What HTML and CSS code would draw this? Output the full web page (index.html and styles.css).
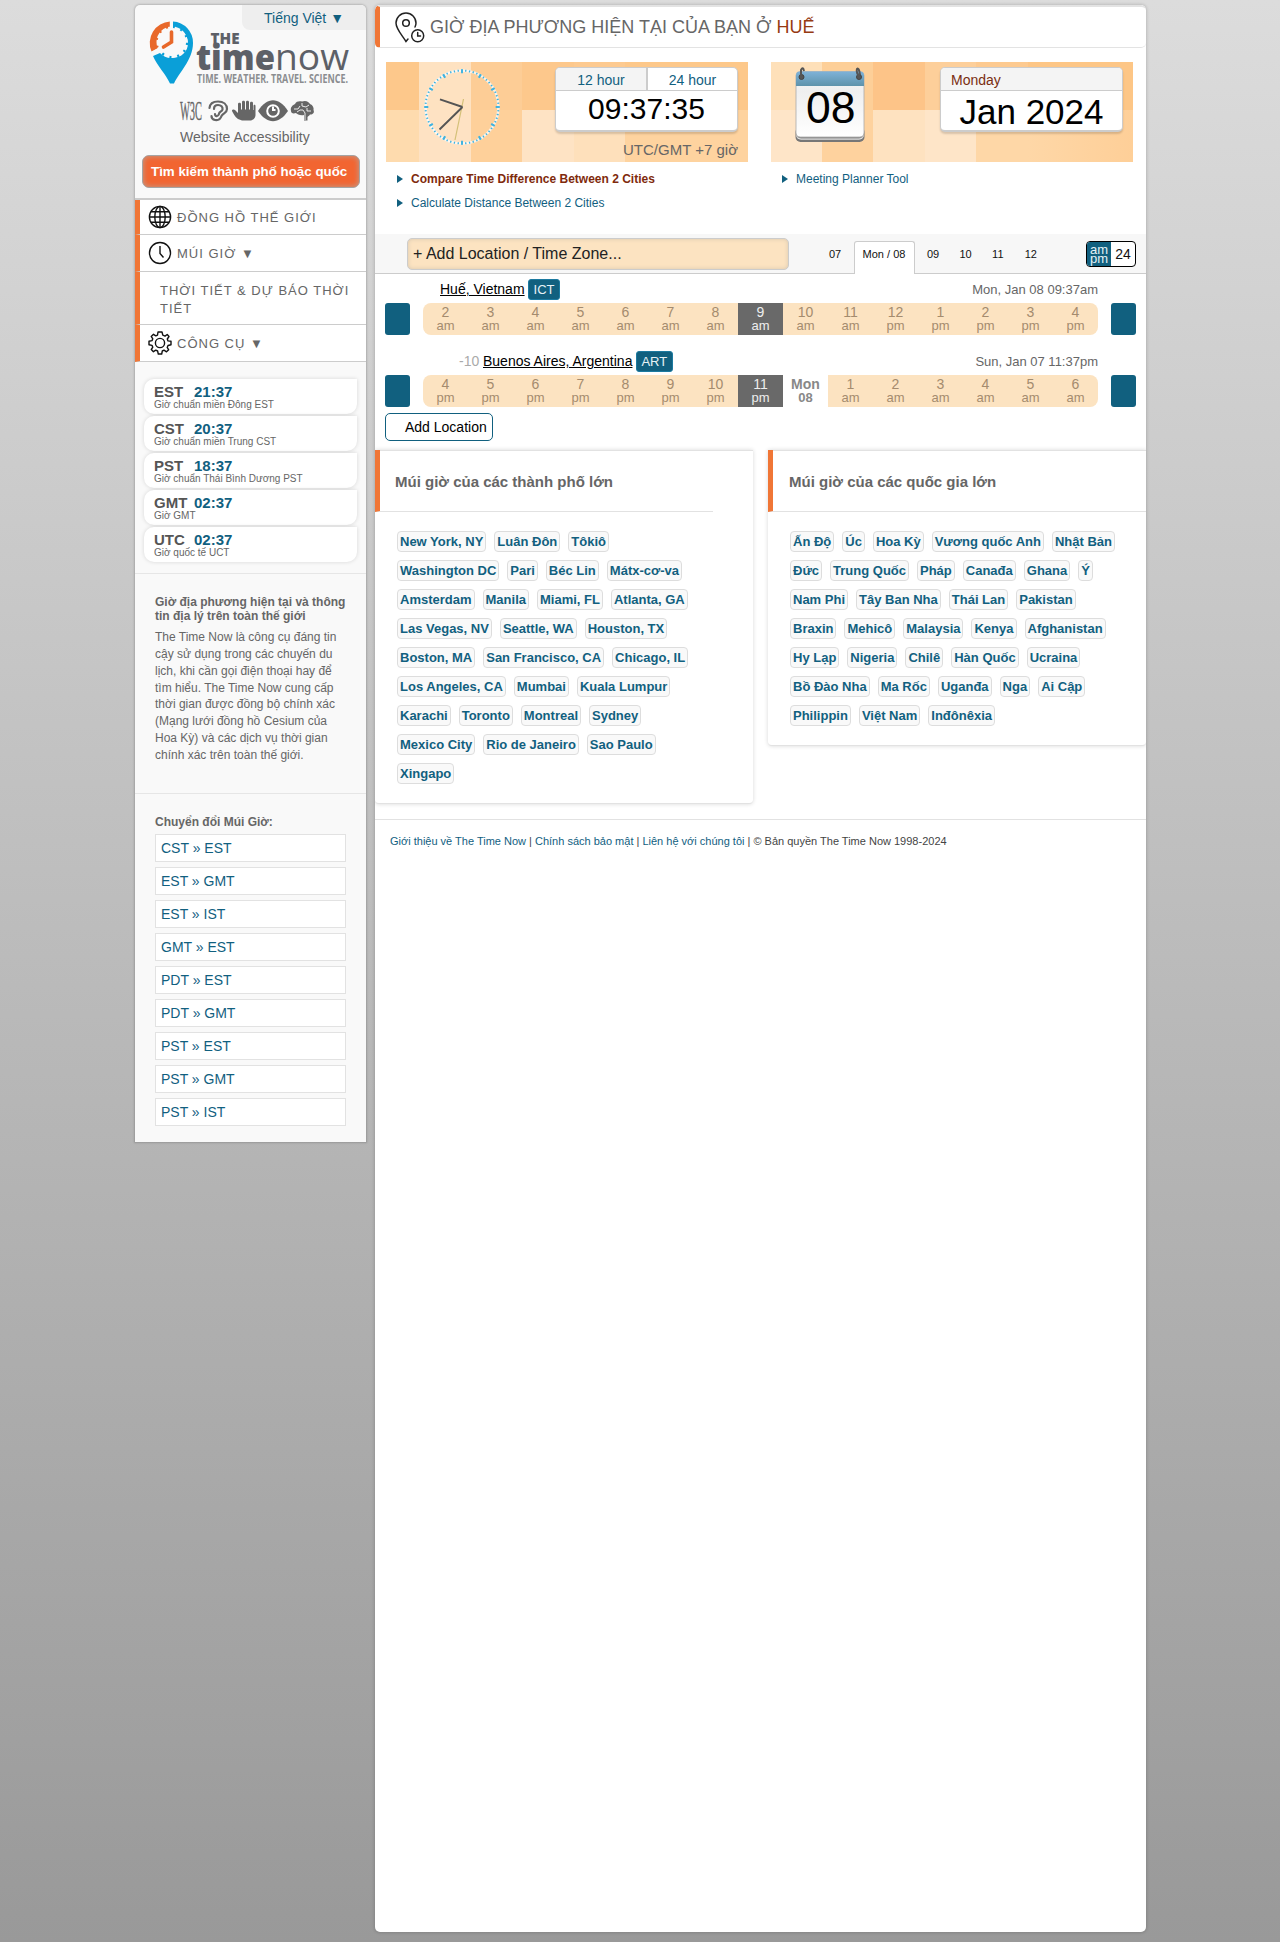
FILE: index.html
```html
<!DOCTYPE html>
<html lang="vi">
<head>
<meta charset="utf-8">
<title>The Time Now - Huế</title>
<link rel="stylesheet" href="styles.css">
</head>
<body>
<div class="page">
  <aside class="sidebar">
    <div class="lang">Tiếng Việt ▼</div>
    <svg class="logo" width="200" height="66" viewBox="0 0 200 66">
      <path d="M23 0.5V7A15 15 0 0 1 38 22A15 15 0 0 1 23 37A15 15 0 0 1 10 32L3 35C8 46 15 52 20 62.500H24C28 53 43 39 43 22A21 21 0 0 0 23 .5Z" fill="#0a9fd8"/>
      <path d="M20 .5A21.500 21.500 0 0 0 1.500 30.500L8 27A15 15 0 0 1 20 7Z" fill="#e8682a"/>
      <circle cx="22" cy="21" r="15.500" fill="#f9f9f9"/>
      <path d="M23 5.800A15.200 15.200 0 1 1 9.500 29.500" fill="none" stroke="#0a9fd8" stroke-width="2.500" stroke-dasharray="2 5.850"/>
      <path d="M7.500 26.500A15.200 15.200 0 0 1 20 5.800" fill="none" stroke="#e8682a" stroke-width="2.500" stroke-dasharray="2 5.850"/>
      <path d="M21.500 11V21L13.500 26" fill="none" stroke="#e8682a" stroke-width="3.600" stroke-linecap="round"/>
      <rect x="19.800" y="0" width="3" height="7" fill="#f9f9f9"/>
      <path d="M2 32L9 28" stroke="#f9f9f9" stroke-width="2.500"/>
      <text class="logo-the" x="60.500" y="23" textLength="29" lengthAdjust="spacingAndGlyphs">THE</text>
      <text class="logo-time" x="46" y="48.500" textLength="79" lengthAdjust="spacingAndGlyphs">time</text>
      <text class="logo-now" x="125" y="48.500" textLength="74" lengthAdjust="spacingAndGlyphs">now</text>
      <text class="logo-tag" x="47" y="61.500" textLength="151" lengthAdjust="spacingAndGlyphs">TIME. WEATHER. TRAVEL. SCIENCE.</text>
    </svg>
    <svg class="access" width="136" height="22" viewBox="0 0 136 22">
      <text class="w3c" x="0" y="19.500" textLength="22" lengthAdjust="spacingAndGlyphs">W3C</text>
      <g fill="none" stroke="#666" stroke-width="2.200" stroke-linecap="round">
        <path d="M29.500 8C30 3 34 1.500 38 1.500C43.500 1.500 47 4.500 47 9C47 13 43 13 41.500 16C40.500 19 38 20.500 35 20C32.500 19.500 31.500 18 31.500 16"/>
        <path d="M34 9C34 6 36 5 38 5C41 5 43 7 42.500 9.500C42 12 39 11 39 14C38 17 35 16.500 35 14"/>
      </g>
      <path d="M58 19C55 17 53 13 52 11C51.500 9.500 54 9 55 10L58 13L58 4C58 2.200 61 2.200 61 4V9.500H62V2C62 .3 65 .3 65 2V9.500H66V2C66 .3 69 .3 69 2V9.500H70V3C70 1.300 73 1.300 73 3V10H73.500V6C73.500 4.300 75.500 4.300 75.500 6V15C75.500 18 73 20.500 70 20.500H62Z" fill="#666"/>
      <path d="M78 11C87 -3.500 99 -3.500 108 11C99 24.500 87 24.500 78 11Z" fill="#666"/>
      <circle cx="93" cy="11" r="5.800" fill="none" stroke="#fff" stroke-width="2"/>
      <path d="M93 6.500V10H95.500" stroke="#fff" stroke-width="2" fill="none"/>
      <path d="M111 11C110 7 113 5 115 4C116 1 120 1 122 1.500C126 0 129 2 130 4C133 5 134 8 133.500 10C135 13 132 15 130 14.500C129 16 128 16 127.500 17V20.500H124V15C121 16 117 14.500 116 13C113 14 111 13 111 11Z" fill="#666"/>
      <path d="M114 9H118L120 6M117 12L120 10H123L125 13M122 3V6L126 7L129 5M127 8V11L131 11M125 13V20" fill="none" stroke="#f9f9f9" stroke-width=".9"/>
    </svg>
    <div class="access-label">Website Accessibility</div>
    <div class="find">Tìm kiếm thành phố hoặc quốc</div>
    <nav class="menu">
      <a class="item globe">
        <svg width="24" height="24" viewBox="0 0 24 24" fill="none" stroke="#111" stroke-width="1.400"><circle cx="12" cy="12" r="10.600"/><ellipse cx="12" cy="12" rx="5.200" ry="10.600"/><path d="M12 1.400V22.600M1.400 12H22.600M3 6.800H21M3 17.200H21"/></svg>
        <span>ĐỒNG HỒ THẾ GIỚI</span></a>
      <a class="item">
        <svg width="24" height="24" viewBox="0 0 24 24" fill="none" stroke="#111" stroke-width="1.400"><circle cx="12" cy="12" r="10.500"/><path d="M12 5V12.500L15.500 16.500"/></svg>
        <span>MÚI GIỜ ▼</span></a>
      <a class="item weather"><span>THỜI TIẾT &amp; DỰ BÁO THỜI TIẾT</span></a>
      <a class="item">
        <svg width="24" height="24" viewBox="0 0 24 24" fill="none" stroke="#111" stroke-width="1.400" stroke-linejoin="round"><circle cx="12" cy="12" r="4.600"/><path d="M10 1H14L14.800 4.200L17 5.100L19.200 3.500L21 5.500L19.300 8L20 9.900L23 10.300V13.700L20 14.500L19.200 16.400L20.700 18.800L18.500 20.800L16 19.200L14.300 20L13.700 23H10.300L9.600 20L7.800 19.200L5.400 20.700L3.300 18.500L4.800 16.200L4 14.400L1 13.700V10.300L4 9.600L4.800 7.800L3.200 5.400L5.500 3.300L7.800 4.800L9.500 4.100Z"/></svg>
        <span>CÔNG CỤ ▼</span></a>
    </nav>
    <div class="zones">
      <div class="zone"><b>EST</b><strong>21:37</strong><small>Giờ chuẩn miền Đông EST</small></div>
      <div class="zone"><b>CST</b><strong>20:37</strong><small>Giờ chuẩn miền Trung CST</small></div>
      <div class="zone"><b>PST</b><strong>18:37</strong><small>Giờ chuẩn Thái Bình Dương PST</small></div>
      <div class="zone"><b>GMT</b><strong>02:37</strong><small>Giờ GMT</small></div>
      <div class="zone"><b>UTC</b><strong>02:37</strong><small>Giờ quốc tế UCT</small></div>
    </div>
    <section class="about">
      <h4>Giờ địa phương hiện tại và thông tin địa lý trên toàn thế giới</h4>
      <p>The Time Now là công cụ đáng tin<br>cậy sử dụng trong các chuyến du<br>lịch, khi cần gọi điện thoại hay để<br>tìm hiểu. The Time Now cung cấp<br>thời gian được đồng bộ chính xác<br>(Mạng lưới đồng hồ Cesium của<br>Hoa Kỳ) và các dịch vụ thời gian<br>chính xác trên toàn thế giới.</p>
    </section>
    <section class="convert">
      <h4>Chuyển đổi Múi Giờ:</h4>
      <a>CST » EST</a><a>EST » GMT</a><a>EST » IST</a><a>GMT » EST</a><a>PDT » EST</a><a>PDT » GMT</a><a>PST » EST</a><a>PST » GMT</a><a>PST » IST</a>
    </section>
  </aside>

  <main class="main">
    <header class="head">
      <svg width="30" height="31" viewBox="0 0 30 31" fill="none" stroke="#222" stroke-width="1.500" stroke-linecap="round"><path d="M13 27L11 29.500C7 23 1 17 1 11A10 10 0 0 1 21 11C21 12.500 20.500 14 20 15"/><circle cx="11" cy="11" r="3.300"/><circle cx="22.700" cy="23.800" r="6"/><path d="M22.700 20.500V24H25.500"/></svg>
      <h1>GIỜ ĐỊA PHƯƠNG HIỆN TẠI CỦA BẠN Ở <em>HUẾ</em></h1>
    </header>
    <div class="banners">
      <div class="col">
        <div class="banner one">
          <svg class="clock" width="78" height="78" viewBox="0 0 78 78" fill="none">
            <circle cx="39" cy="39" r="36.500" stroke="#fff" stroke-width="2.500" stroke-opacity=".7"/>
            <circle cx="39" cy="39" r="36.500" stroke="#3fb3e0" stroke-width="2" pathLength="240" stroke-dasharray="1.400 2.600" stroke-dashoffset=".7"/>
            <circle cx="39" cy="39" r="35.700" stroke="#3fb3e0" stroke-width="4" pathLength="240" stroke-dasharray="2.200 17.800" stroke-dashoffset="1.100"/>
            <path d="M40.500 31L32 72" stroke="#d3c077" stroke-width="1.200"/>
            <path d="M39.500 39L17 31.300M39.500 39L16.500 61.500" stroke="#555" stroke-width="1.900"/>
          </svg>
          <div class="right">
            <div class="box"><div class="tabs"><span class="on">12 hour</span><span>24 hour</span></div><div class="time">09:37:35</div></div>
            <div class="utc">UTC/GMT +7 giờ</div>
          </div>
        </div>
        <a class="lnk hot">Compare Time Difference Between 2 Cities</a>
        <a class="lnk">Calculate Distance Between 2 Cities</a>
      </div>
      <div class="col">
        <div class="banner two">
          <div class="cal">
            <svg class="calpic" width="70" height="76" viewBox="0 0 70 76">
              <defs>
                <linearGradient id="blue" x1="0" y1="0" x2="0" y2="1"><stop offset="0" stop-color="#7fb2d8"/><stop offset="1" stop-color="#5e93ab"/></linearGradient>
                <linearGradient id="paper" x1="0" y1="0" x2="0" y2="1"><stop offset="0" stop-color="#fafafa"/><stop offset=".3" stop-color="#efefef"/><stop offset="1" stop-color="#fff"/></linearGradient>
              </defs>
              <rect x=".5" y="60" width="69" height="15" rx="5" fill="#777"/>
              <rect x="1" y="58" width="68" height="14.800" rx="5" fill="#ddd"/>
              <rect x="1" y="58" width="68" height="13.500" rx="5" fill="#888"/>
              <rect x="1" y="4.500" width="68" height="65.500" rx="4" fill="url(#paper)" stroke="#aaa" stroke-width=".8"/>
              <path d="M1 19V8.500A4 4 0 0 1 5 4.500H65A4 4 0 0 1 69 8.500V19Z" fill="url(#blue)"/>
              <g stroke="#444" fill="#555"><circle cx="6.500" cy="10" r="2.500"/><circle cx="64" cy="10" r="2.500"/></g>
              <path d="M6 9V3Q8 -1 9 4M64 9Q61 6 62 2Q64 0 65 8" fill="none" stroke="#555" stroke-width="2"/>
            </svg>
            <span class="day">08</span>
          </div>
          <div class="right"><div class="box"><div class="weekday">Monday</div><div class="month">Jan 2024</div></div></div>
        </div>
        <a class="lnk">Meeting Planner Tool</a>
      </div>
    </div>

    <div class="bar">
      <div class="add-input">+ Add Location / Time Zone...</div>
      <div class="days"><span>07</span><span class="cur">Mon / 08</span><span>09</span><span>10</span><span>11</span><span>12</span></div>
      <div class="toggle"><span class="ap">am<br>pm</span><span class="tf">24</span></div>
    </div>

    <div class="loc">
      <div class="loc-top"><span class="off"></span><u>Huế, Vietnam</u><span class="badge">ICT</span><span class="date">Mon, Jan 08 09:37am</span></div>
      <div class="loc-row"><i class="btn"></i>
        <div class="hours"><span>2<s>am</s></span><span>3<s>am</s></span><span>4<s>am</s></span><span>5<s>am</s></span><span>6<s>am</s></span><span>7<s>am</s></span><span>8<s>am</s></span><span class="now">9<s>am</s></span><span>10<s>am</s></span><span>11<s>am</s></span><span>12<s>pm</s></span><span>1<s>pm</s></span><span>2<s>pm</s></span><span>3<s>pm</s></span><span>4<s>pm</s></span></div>
      <i class="btn"></i></div>
    </div>
    <div class="loc second">
      <div class="loc-top"><span class="off">-10</span><u>Buenos Aires, Argentina</u><span class="badge">ART</span><span class="date">Sun, Jan 07 11:37pm</span></div>
      <div class="loc-row"><i class="btn"></i>
        <div class="hours"><span>4<s>pm</s></span><span>5<s>pm</s></span><span>6<s>pm</s></span><span>7<s>pm</s></span><span>8<s>pm</s></span><span>9<s>pm</s></span><span>10<s>pm</s></span><span class="now">11<s>pm</s></span><span class="newday">Mon<s>08</s></span><span>1<s>am</s></span><span>2<s>am</s></span><span>3<s>am</s></span><span>4<s>am</s></span><span>5<s>am</s></span><span>6<s>am</s></span></div>
      <i class="btn"></i></div>
    </div>
    <div class="add-btn">Add Location</div>

    <div class="panels">
      <section class="panel">
        <h3 class="short">Múi giờ của các thành phố lớn</h3>
        <div class="chips cities"><a>New York, NY</a><a>Luân Đôn</a><a>Tôkiô</a><a>Washington DC</a><a>Pari</a><a>Béc Lin</a><a>Mátx-cơ-va</a><a>Amsterdam</a><a>Manila</a><a>Miami, FL</a><a>Atlanta, GA</a><a>Las Vegas, NV</a><a>Seattle, WA</a><a>Houston, TX</a><a>Boston, MA</a><a>San Francisco, CA</a><a>Chicago, IL</a><a>Los Angeles, CA</a><a>Mumbai</a><a>Kuala Lumpur</a><a>Karachi</a><a>Toronto</a><a>Montreal</a><a>Sydney</a><a>Mexico City</a><a>Rio de Janeiro</a><a>Sao Paulo</a><a>Xingapo</a></div>
      </section>
      <section class="panel">
        <h3>Múi giờ của các quốc gia lớn</h3>
        <div class="chips countries"><a>Ấn Độ</a><a>Úc</a><a>Hoa Kỳ</a><a>Vương quốc Anh</a><a>Nhật Bản</a><a>Đức</a><a>Trung Quốc</a><a>Pháp</a><a>Canađa</a><a>Ghana</a><a>Ý</a><a>Nam Phi</a><a>Tây Ban Nha</a><a>Thái Lan</a><a>Pakistan</a><a>Braxin</a><a>Mehicô</a><a>Malaysia</a><a>Kenya</a><a>Afghanistan</a><a>Hy Lạp</a><a>Nigeria</a><a>Chilê</a><a>Hàn Quốc</a><a>Ucraina</a><a>Bồ Đào Nha</a><a>Ma Rốc</a><a>Uganđa</a><a>Nga</a><a>Ai Cập</a><a>Philippin</a><a>Việt Nam</a><a>Inđônêxia</a></div>
      </section>
    </div>
    <footer class="foot"><a>Giới thiệu về The Time Now</a> | <a>Chính sách bảo mật</a> | <a>Liên hệ với chúng tôi</a> | © Bản quyền The Time Now 1998-2024</footer>
  </main>
</div>
</body>
</html>
```

FILE: styles.css
```css
* { box-sizing: border-box; }
body {
  margin: 0;
  min-height: 1942px;
  font-family: "Liberation Sans", Arial, sans-serif;
  font-size: 14px;
  color: #666;
  background: linear-gradient(#dcdcdc, #999);
}
.page { display: flex; align-items: flex-start; gap: 9px; width: 1011px; height: 1942px; margin-left: 135px; padding-top: 5px; }
h1, h3, h4, p { margin: 0; }
a { color: #11607f; }

.sidebar { display: flex; flex-direction: column; width: 231px; height: 1137px; background: #f9f9f9; border-radius: 5px 5px 0 0; box-shadow: 0 0 2px 1px rgba(0,0,0,.17); }
.lang { align-self: flex-end; width: 124px; height: 25px; padding-left: 22px; line-height: 26px; background: #eee; border-radius: 0 5px 0 8px; color: #11607f; }
.logo { margin: -9px 0 0 15px; flex: none; overflow: visible; }
.logo text { font-family: "Open Sans", sans-serif; fill: #5d6067; }
.logo .logo-the { font-size: 15.500px; font-weight: 800; }
.logo .logo-time { font-size: 36px; font-weight: 800; }
.logo .logo-now { font-size: 37px; font-weight: 400; }
.logo .logo-tag { font-size: 12px; font-weight: 700; fill: #8b8d90; }
.access { margin: 13px 0 0 45px; flex: none; overflow: visible; }
.w3c { font-family: "Liberation Serif", serif; font-size: 27px; fill: #666; stroke: #666; stroke-width: .4px; }
.access-label { height: 20px; margin: 5px 0 0 45px; line-height: 20px; }
.find { width: 218px; height: 33px; margin: 8px 0 0 7px; padding-left: 8px; border: 1px solid #a5a5a5; border-radius: 7px; background: #f26531; box-shadow: inset 0 0 5px 1px #c9927b; color: #fff; font-size: 13.333px; font-weight: 700; line-height: 32px; white-space: nowrap; }
.menu { margin-top: 10px; border-top: 2px solid #ccc; background: #fff; }
.item { display: flex; align-items: center; height: 37px; padding-left: 8px; border-left: 5px solid #f07636; border-bottom: 1px solid #ccc; font-size: 13px; letter-spacing: 1px; color: #666; }
.item svg { margin-right: 5px; }
.item.globe { height: 35px; }
.item.weather { height: 53px; padding: 3px 13px 0 20px; line-height: 18px; }
.zones { display: grid; gap: 2px; margin: 17px 9px 0; }
.zone { display: flex; flex-wrap: wrap; align-content: flex-start; height: 35px; padding: 4px 10px 0; border-radius: 10px 0 10px 10px; background: #fff; box-shadow: 0 0 4px rgba(0,0,0,.14); font-size: 15px; line-height: 18px; color: #555; }
.zone b { width: 40px; }
.zone strong { color: #11607f; }
.zone small { width: 100%; font-size: 10px; line-height: 8px; color: #666; }
.about { height: 220px; margin-top: 11px; padding: 21px 20px 0; border-top: 1px solid #e6e6e6; }
h4 { font-size: 12px; line-height: 14px; white-space: nowrap; }
.about h4 { width: 195px; white-space: normal; }
.about p { margin-top: 6px; font-size: 12px; line-height: 16.850px; white-space: nowrap; }
.convert { padding: 21px 20px 0; border-top: 1px solid #e6e6e6; }
.convert h4 { margin-bottom: 5px; }
.convert a { display: block; height: 28px; margin-bottom: 5px; padding-left: 5px; border: 1px solid #e2e2e2; background: #fff; line-height: 27px; }

.main { width: 771px; height: 1927px; background: #fff; border-radius: 5px; box-shadow: 0 0 3px 1px rgba(0,0,0,.14); overflow: hidden; }
.head { display: flex; height: 43px; padding: 5px 0 0 15px; border: solid #e3e3e3; border-width: 2px 0 1px; border-left: 5px solid #f07636; border-radius: 5px; }
.head h1 { margin-left: 5px; font-size: 18px; font-weight: 400; line-height: 30px; white-space: nowrap; }
.head em { font-style: normal; color: #963a12; }
.banners { display: flex; gap: 23px; height: 186px; padding: 14px 11px 0; }
.col { width: 362px; }
.banner { display: flex; justify-content: space-between; height: 100px; padding: 5px 10px 0 37px; margin-bottom: 5px; background-repeat: no-repeat; background-size: 100% 48px, 100% 52px; background-position: 0 0, 0 48px; }
.one { background-image: linear-gradient(90deg, #fdc88b 33px, #fee2c1 33px 85px, #fdcd96 85px 136px, #fdc88c 136px 188px, #fdca90 188px 239px, #fdc88a 239px), linear-gradient(90deg, #fedbae 33px, #fee2c3 33px 85px, #fed09a 85px 136px, #fee3c4 136px 188px, #fee0bb 188px 239px, #fed39f 239px); }
.two { background-image: linear-gradient(90deg, #fee0b9 51px, #fdcf98 51px 102px, #fdc488 102px 154px, #fdcf9a 154px 205px, #fdca90 205px 257px, #fdc686 257px), linear-gradient(90deg, #fee5c8 51px, #fed29e 51px 102px, #fee2c0 102px 154px, #fee5c8 154px 205px, #fed7a7 205px 257px, #fecf98); padding-left: 24px; }
.clock { margin-top: 1px; }
.right { width: 183px; }
.box { height: 65px; border: 1px solid #ccc; border-bottom-width: 2px; border-radius: 5px; background: #fff; box-shadow: 0 2px 2px rgba(0,0,0,.15); color: #000; text-align: center; overflow: hidden; }
.tabs { display: flex; height: 23px; border-bottom: 1px solid #ccc; line-height: 24px; color: #11607f; }
.tabs span { width: 89px; }
.tabs .on { width: 92px; background: #f4f4f4; border-right: 2px solid #ccc; }
.time { font-size: 30px; line-height: 36px; }
.utc { margin-top: 8px; font-size: 15px; line-height: 20px; text-align: right; }
.weekday { height: 23px; padding-left: 10px; border-bottom: 1px solid #ccc; background: #f4f4f4; line-height: 24px; text-align: left; color: #7a2e10; }
.month { font-size: 35px; line-height: 42px; }
.cal { position: relative; }
.day { position: absolute; left: 11px; top: 17px; font-size: 44.500px; line-height: 48px; color: #000; }
.lnk { display: flex; align-items: center; height: 24px; padding-left: 11px; font-size: 12px; }
.lnk::before { content: ""; width: 0; margin-right: 8px; border: solid transparent; border-width: 4px 0 4px 6px; border-left-color: #11607f; }
.hot { font-weight: 700; color: #7f2a0c; }

.bar { display: flex; height: 40px; padding: 4px 10px 0 32px; background: #f7f7f7; border-bottom: 1px solid #ccc; }
.add-input { width: 382px; height: 32px; padding-left: 5px; border: 1px solid #ccc; border-radius: 5px; background: #fce3c1; box-shadow: inset 0 0 4px #d8c8b0; font-size: 16px; line-height: 30px; color: #222; }
.days { display: flex; width: 297px; padding: 3px 0 0 32px; font-size: 11px; line-height: 26px; color: #111; }
.days span { width: 32.600px; height: 33px; padding-left: 8px; }
.days .cur { width: 61px; border: 1px solid #ccc; border-bottom: 0; border-radius: 3px 3px 0 0; background: #fff; line-height: 24px; }
.days span:nth-child(n+3) { padding-left: 12.300px; }
.toggle { display: flex; width: 50px; height: 26px; margin-top: 3px; border: 1px solid #000; border-radius: 4px; overflow: hidden; color: #111; background: #fff; line-height: 25px; }
.ap { width: 24px; background: #11607f; color: #e6f2f6; font-size: 13px; line-height: 9px; padding-top: 3px; text-align: center; }
.tf { flex: 1; text-align: center; }

.loc { height: 62px; padding: 5px 10px 0; }
.second { height: 72px; padding-top: 15px; }
.loc-top { display: flex; align-items: center; height: 21px; padding: 0 38px 0 55px; line-height: 21px; }
.second .loc-top { padding-left: 74px; }
.off { color: #aaa; }
.second .off { width: 24px; }
u { color: #000; }
.badge { height: 21px; margin-left: 3.500px; padding: 0 4.500px; border-radius: 3px; background: #11607f; border: 1px solid #1c7aa0; line-height: 20px; font-size: 13px; color: #e6f2f6; }
.date { margin-left: auto; font-size: 13px; }
.loc-row { display: flex; justify-content: space-between; margin-top: 3px; }
.btn { width: 25px; height: 32px; border-radius: 3px; background: #11607f; }
.hours { display: flex; width: 675px; height: 32px; border-radius: 8px; overflow: hidden; background: #fce3c1; }
.hours span { width: 45px; padding-top: 2px; text-align: center; line-height: 15px; color: #a48b6e; }
.hours s { display: block; margin-top: -1px; font-size: 13px; line-height: 14px; text-decoration: none; }
.hours .now { background: #696969; color: #eee; }
.hours .newday { background: #fff; color: #888; font-weight: 700; }
.add-btn { width: 108px; height: 28px; margin: 5px 0 0 10px; padding-left: 19px; border: 1px solid #11607f; border-radius: 5px; line-height: 27px; color: #000; }

.panels { display: flex; align-items: flex-start; gap: 15px; margin-top: 9px; }
.panel { width: 378px; background: #fff; border-top: 1px solid #e2e2e2; border-bottom: 1px solid #e2e2e2; border-radius: 0 0 4px 4px; box-shadow: 0 0 4px rgba(0,0,0,.16); }
.panel h3 { height: 62px; margin-top: -1px; padding-left: 16px; border-left: 5px solid #f07636; border-bottom: 1px solid #e2e2e2; font-size: 15px; line-height: 64px; }
.panel h3.short { width: 338px; padding-left: 15px; }
.chips { display: flex; flex-wrap: wrap; gap: 8px; padding: 19px 0 19px 22px; }
.cities { width: 335px; }
.countries { width: 352px; }
.chips a { height: 21px; padding: 0 2px; border: 1px solid #ddd; border-radius: 4px; background: #f9f9f9; font-size: 13px; font-weight: 700; line-height: 20px; white-space: nowrap; }
.foot { margin-top: 15px; padding: 13px 15px; border-top: 1px solid #e2e2e2; font-size: 11px; line-height: 16px; color: #444; }
```
